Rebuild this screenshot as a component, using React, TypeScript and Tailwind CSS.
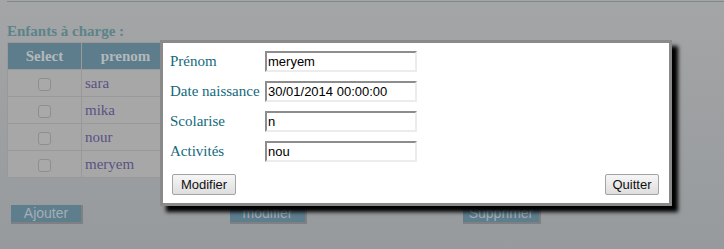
import React from 'react';

const kids = ['sara', 'mika', 'nour', 'meryem'];

const fields = [
  { label: 'Prénom', value: 'meryem' },
  { label: 'Date naissance', value: '30/01/2014 00:00:00' },
  { label: 'Scolarise', value: 'n' },
  { label: 'Activités', value: 'nou' },
];

function PageButton({ label, className }: { label: string; className: string }) {
  return (
    <button
      className={`h-[19px] bg-[#5e7e8e] text-[14px] leading-[17px] text-[#a3afb5] border-r-2 border-b-2 border-[#7d8184] ${className}`}
      style={{ fontFamily: '"Liberation Sans", Arial, sans-serif' }}
    >
      {label}
    </button>
  );
}

function DialogButton({ label, className = '' }: { label: string; className?: string }) {
  return (
    <button
      className={`h-[21px] rounded-[2px] border border-[#a3a3a3] bg-gradient-to-b from-[#f6f6f6] to-[#dedede] text-[13px] leading-[19px] text-[#111] ${className}`}
      style={{ fontFamily: '"Liberation Sans", Arial, sans-serif' }}
    >
      {label}
    </button>
  );
}

export default function App() {
  return (
    <div
      className="relative w-[724px] h-[249px] overflow-hidden bg-gradient-to-b from-[#a3a5a6] to-[#979a9d]"
      style={{ fontFamily: '"Liberation Serif", "Times New Roman", serif' }}
    >
      {/* Page behind the overlay */}
      <div className="pt-px pl-[7px]">
        <div className="h-px bg-[#7f8888]" />
        <h3 className="mt-[20px] text-[15px] font-bold leading-[18px] text-[#5b8389]">
          Enfants à charge :
        </h3>
        <table className="mt-[2px] border-collapse">
          <thead>
            <tr className="h-[27px] bg-[#5d7d8c] text-[15px] font-bold text-[#b3b8ba]">
              <th className="w-[74px] border border-[#9a9a9a] font-bold">Select</th>
              <th className="w-[88px] border border-[#9a9a9a] font-bold">prenom</th>
            </tr>
          </thead>
          <tbody>
            {kids.map((k) => (
              <tr key={k} className="h-[27px] bg-[#a7a7a7]">
                <td className="border border-[#999] text-center">
                  <span className="inline-block w-[13px] h-[13px] rounded-[3px] border border-[#8e8e8e] bg-[#a9a9a9] align-middle" />
                </td>
                <td className="border border-[#999] pl-[3px] text-[15px] text-[#5a5283]">{k}</td>
              </tr>
            ))}
          </tbody>
        </table>
        <div className="mt-[27px] flex">
          <PageButton label="Ajouter" className="ml-[4px] w-[72px]" />
          <PageButton label="modifier" className="ml-[147px] w-[77px]" />
          <PageButton label="Supprimer" className="ml-[156px] w-[78px]" />
        </div>
      </div>

      {/* Dialog */}
      <div className="absolute left-[160px] top-[40px] w-[512px] h-[166px] border-[3px] border-[#8a8a8a] bg-white shadow-[6px_6px_4px_#000] px-[7px] pt-[8px]">
        <div className="grid grid-cols-[95px_152px] gap-y-[9px] items-center">
          {fields.map((f) => (
            <React.Fragment key={f.label}>
              <span className="text-[15px] leading-[21px] text-[#13697c] whitespace-nowrap">{f.label}</span>
              <div
                className="h-[21px] border-2 border-t-[#8d8d8d] border-l-[#8d8d8d] border-b-[#ececec] border-r-[#ececec] pl-px text-[13px] leading-[17px] text-[#000]"
                style={{ fontFamily: '"Liberation Sans", Arial, sans-serif' }}
              >
                {f.value}
              </div>
            </React.Fragment>
          ))}
        </div>
        <div className="mt-[12px] flex justify-between pl-[2px] pr-[3px]">
          <DialogButton label="Modifier" className="w-[64px]" />
          <DialogButton label="Quitter" className="w-[54px]" />
        </div>
      </div>
    </div>
  );
}
